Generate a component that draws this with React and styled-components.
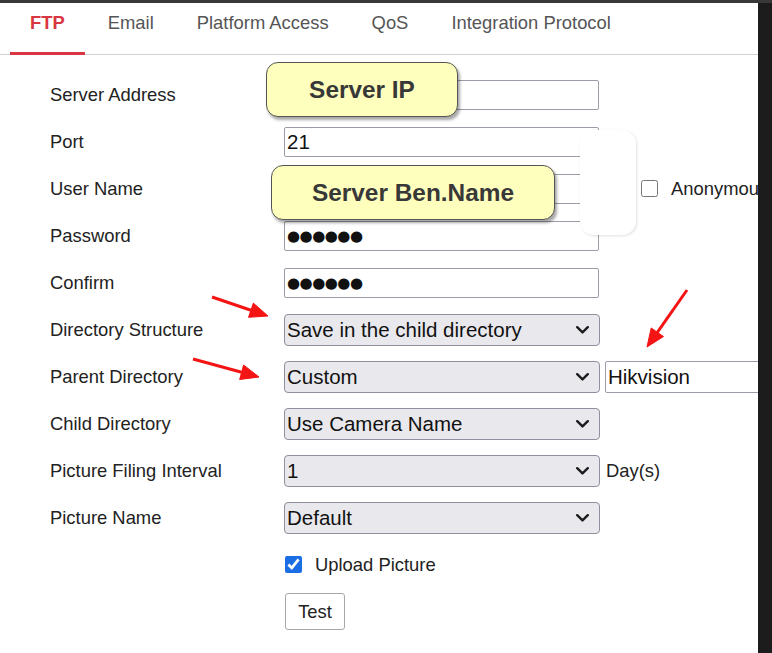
import React from "react"
import styled, { createGlobalStyle } from "styled-components"

const GlobalStyle = createGlobalStyle`
  html, body {
    margin: 0;
    background: #1e1e1e;
    font-family: "Liberation Sans", Arial, sans-serif;
  }
`

const tabs = ["FTP", "Email", "Platform Access", "QoS", "Integration Protocol"]

// red pointer arrows drawn over the form (tail -> tip)
const arrows = [
  { from: [212, 294], to: [268, 313] },
  { from: [193, 356], to: [259, 374] },
  { from: [687, 287], to: [647, 344] },
]

const arrowHead = (from, to, len = 18, half = 7.5) => {
  const dx = to[0] - from[0]
  const dy = to[1] - from[1]
  const d = Math.hypot(dx, dy)
  const ux = dx / d
  const uy = dy / d
  const bx = to[0] - ux * len
  const by = to[1] - uy * len
  return {
    base: [bx, by],
    points: `${to[0]},${to[1]} ${bx - uy * half},${by + ux * half} ${bx + uy * half},${by - ux * half}`,
  }
}

const Chevron = () => (
  <ChevronIcon width="13" height="8" viewBox="0 0 13 8">
    <path d="M1.2 1.2 L6.5 6.4 L11.8 1.2" fill="none" stroke="#1d1d1d" strokeWidth="2.4" strokeLinecap="round" strokeLinejoin="round" />
  </ChevronIcon>
)

const Dropdown = ({ value }) => (
  <SelectWrap>
    <Select defaultValue={value}>
      <option>{value}</option>
    </Select>
    <Chevron />
  </SelectWrap>
)

export default function App() {
  return (
    <Frame>
      <GlobalStyle />
      <TopStrip />
      <Body>
        <Panel>
          <TabBar>
            {tabs.map((t, i) => (
              <Tab key={t} $active={i === 0}>
                {t}
              </Tab>
            ))}
          </TabBar>

          <Form onSubmit={e => e.preventDefault()}>
            <Row>
              <Label>Server Address</Label>
              <TextBox defaultValue="" />
            </Row>
            <Row>
              <Label>Port</Label>
              <TextBox defaultValue="21" />
            </Row>
            <Row>
              <Label>User Name</Label>
              <TextBox defaultValue="" />
              <Check type="checkbox" $gap={42} />
              <CheckText>Anonymous</CheckText>
            </Row>
            <Row>
              <Label>Password</Label>
              <TextBox $dots defaultValue="●●●●●●" />
            </Row>
            <Row>
              <Label>Confirm</Label>
              <TextBox $dots defaultValue="●●●●●●" />
            </Row>
            <Row>
              <Label>Directory Structure</Label>
              <Dropdown value="Save in the child directory" />
            </Row>
            <Row>
              <Label>Parent Directory</Label>
              <Dropdown value="Custom" />
              <TextBox $tall $w={200} $ml={5} defaultValue="Hikvision" />
            </Row>
            <Row>
              <Label>Child Directory</Label>
              <Dropdown value="Use Camera Name" />
            </Row>
            <Row>
              <Label>Picture Filing Interval</Label>
              <Dropdown value="1" />
              <Unit>Day(s)</Unit>
            </Row>
            <Row>
              <Label>Picture Name</Label>
              <Dropdown value="Default" />
            </Row>
            <Row $indent>
              <Check type="checkbox" defaultChecked $gap={1} />
              <CheckText>Upload Picture</CheckText>
            </Row>
            <Row $indent>
              <Button type="button">Test</Button>
            </Row>
          </Form>

          <Callout style={{ left: 266, top: 59, width: 192 }}>Server IP</Callout>
          <Callout style={{ left: 271, top: 162, width: 284 }}>Server Ben.Name</Callout>
          <Patch />

          <ArrowLayer width="758" height="650" viewBox="0 0 758 650">
            {arrows.map((a, i) => {
              const h = arrowHead(a.from, a.to)
              return (
                <g key={i} fill="#f41414" stroke="#f41414">
                  <line x1={a.from[0]} y1={a.from[1]} x2={h.base[0]} y2={h.base[1]} strokeWidth="3" />
                  <polygon points={h.points} strokeWidth="1" />
                </g>
              )
            })}
          </ArrowLayer>
        </Panel>
        <Gutter />
      </Body>
    </Frame>
  )
}

const Frame = styled.div`
  width: 772px;
  height: 653px;
  display: flex;
  flex-direction: column;
  background: #1e1e1e;
`

const TopStrip = styled.div`
  height: 3px;
  background: #383838;
`

const Body = styled.div`
  flex: 1;
  display: flex;
  min-height: 0;
`

const Panel = styled.main`
  position: relative;
  width: 758px;
  flex: none;
  background: #fff;
  overflow: hidden;
`

const Gutter = styled.div`
  flex: 1;
  background: #1c1c1c;
`

const TabBar = styled.nav`
  display: flex;
  gap: 3px;
  height: 52px;
  padding-left: 10px;
  box-sizing: border-box;
  border-bottom: 1px solid #d2d2d2;
`

const Tab = styled.div`
  height: 52px;
  margin-bottom: -1px;
  padding: 9px 20px 0;
  box-sizing: border-box;
  font-size: 18.4px;
  line-height: 22px;
  white-space: nowrap;
  color: ${p => (p.$active ? "#d83640" : "#555")};
  font-weight: ${p => (p.$active ? 700 : 400)};
  border-bottom: 3px solid ${p => (p.$active ? "#d83640" : "transparent")};
`

const Form = styled.form`
  padding: 16px 0 0 50px;
`

const Row = styled.div`
  display: flex;
  align-items: center;
  height: 47px;
  padding-left: ${p => (p.$indent ? 234 : 0)}px;
  white-space: nowrap;
`

const Label = styled.label`
  width: 234px;
  flex: none;
  font-size: 18.4px;
  color: #222;
`

const TextBox = styled.input`
  flex: none;
  box-sizing: border-box;
  width: ${p => p.$w || 315}px;
  height: ${p => (p.$tall ? 32 : 30)}px;
  margin-left: ${p => p.$ml || 0}px;
  padding: 0 2px;
  border: 1px solid #9c9ca8;
  border-radius: 2px;
  background: #fff;
  color: #111;
  font-family: ${p => (p.$dots ? '"DejaVu Sans", sans-serif' : '"Liberation Sans", Arial, sans-serif')};
  font-size: ${p => (p.$dots ? "15px" : "20.5px")};
  letter-spacing: ${p => (p.$dots ? "-0.5px" : "0")};
  outline: none;
`

const SelectWrap = styled.div`
  position: relative;
  flex: none;
  width: 316px;
  height: 32px;
`

const Select = styled.select`
  appearance: none;
  width: 100%;
  height: 100%;
  box-sizing: border-box;
  padding: 0 30px 0 2px;
  border: 1px solid #8f8f9d;
  border-radius: 4px;
  background: #e9e9ed;
  color: #111;
  font-family: "Liberation Sans", Arial, sans-serif;
  font-size: 20.5px;
  outline: none;
`

const ChevronIcon = styled.svg`
  position: absolute;
  right: 11px;
  top: 12px;
  pointer-events: none;
`

const Unit = styled.span`
  margin-left: 6px;
  font-size: 18.4px;
  color: #222;
`

const Check = styled.input`
  flex: none;
  width: 17px;
  height: 17px;
  margin: 0 13px 0 ${p => p.$gap}px;
  accent-color: #1b6de3;
`

const CheckText = styled.span`
  font-size: 18.4px;
  color: #222;
`

const Button = styled.button`
  width: 60px;
  height: 37px;
  margin-left: 1px;
  border: 1px solid #a8a8a8;
  border-radius: 3px;
  background: #fff;
  color: #222;
  font-family: "Liberation Sans", Arial, sans-serif;
  font-size: 18.4px;
`

const Callout = styled.div`
  position: absolute;
  height: 55px;
  box-sizing: border-box;
  display: flex;
  align-items: center;
  justify-content: center;
  border: 1.5px solid #555;
  border-radius: 12px;
  background: #ffffbd;
  box-shadow: 2px 3px 3px rgba(0, 0, 0, 0.35);
  color: #383838;
  font-size: 24.4px;
  font-weight: 700;
`

const Patch = styled.div`
  position: absolute;
  left: 580px;
  top: 127px;
  width: 56px;
  height: 105px;
  background: #fff;
  border-radius: 14px;
  box-shadow: 1px 1px 3px rgba(0, 0, 0, 0.12);
`

const ArrowLayer = styled.svg`
  position: absolute;
  left: 0;
  top: 0;
  pointer-events: none;
`
